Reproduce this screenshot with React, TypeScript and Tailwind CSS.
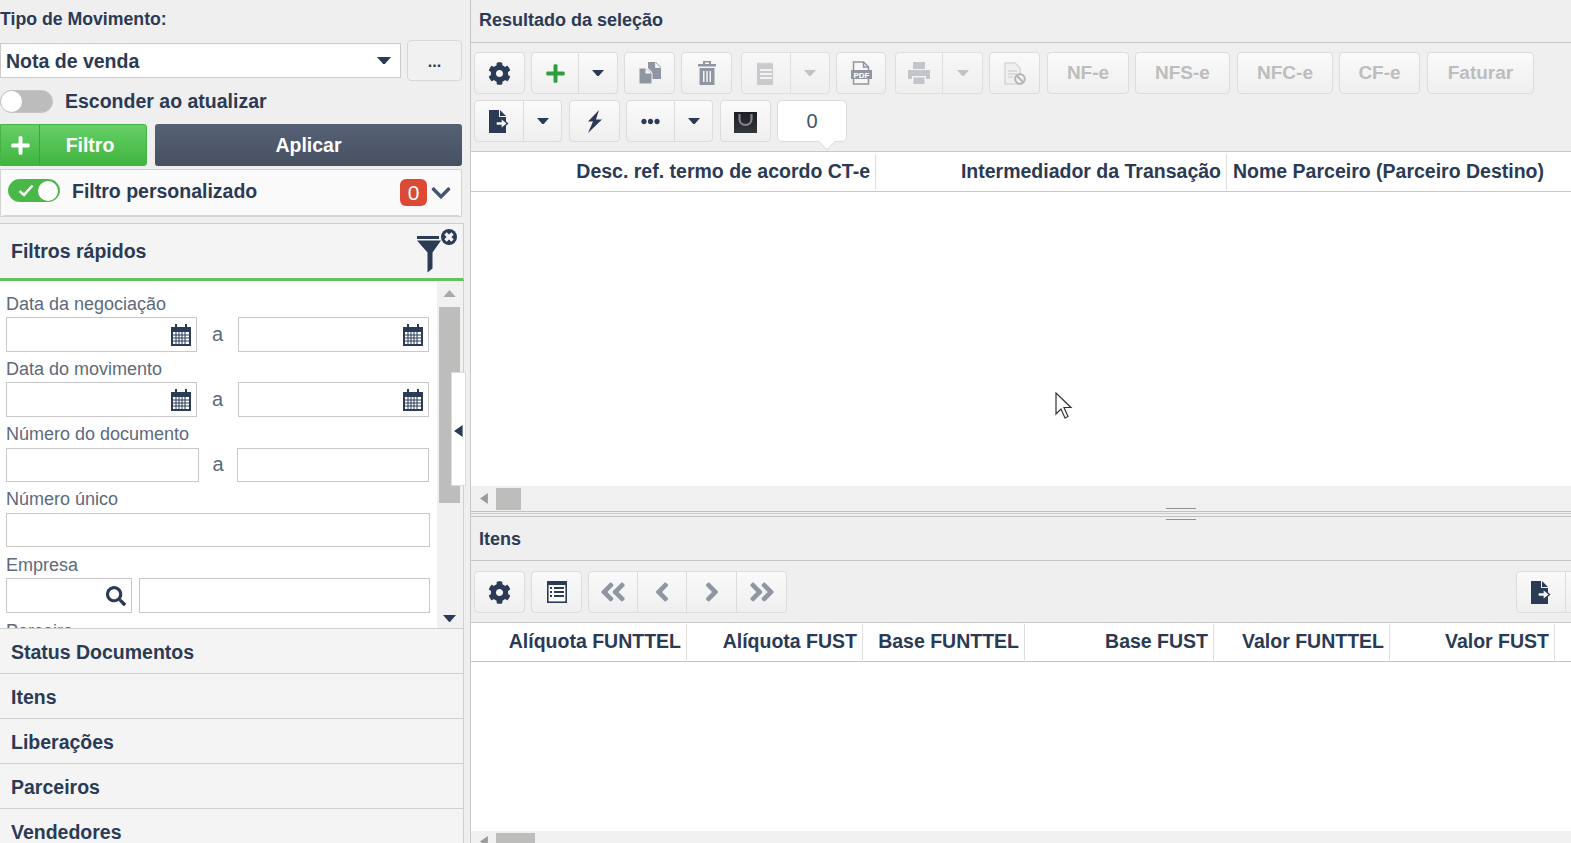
import type { ReactNode } from "react";
import {
  FaAngleDoubleLeft,
  FaAngleDoubleRight,
  FaAngleLeft,
  FaAngleRight,
  FaChevronDown,
  FaCog,
  FaEllipsisH,
  FaPlus,
  FaSearch,
} from "react-icons/fa";

const navy = "#2b3a55";

function Caret({ up, left, color = navy, size = 14 }: { up?: boolean; left?: boolean; color?: string; size?: number }) {
  let points = "0,0 14,0 7,8";
  if (up) points = "0,8 14,8 7,0";
  if (left) points = "10,0 10,14 0,7";
  return (
    <svg width={left ? size * 0.72 : size} height={left ? size : size * 0.57} viewBox={left ? "0 0 10 14" : "0 0 14 8"}>
      <polygon points={points} fill={color} />
    </svg>
  );
}

function Btn({ className, children }: { className: string; children?: ReactNode }) {
  return (
    <div className={`flex h-full shrink-0 items-center justify-center border border-[#dcdcdc] bg-linear-to-b from-[#fafafa] to-[#efefef] ${className}`}>
      {children}
    </div>
  );
}

function TextBtn({ className, label }: { className: string; label: string }) {
  return <Btn className={`rounded-[4px] text-[19px] font-bold text-[#bdbdbd] ${className}`}>{label}</Btn>;
}

function CalendarIcon() {
  return (
    <svg width="20" height="22" viewBox="0 0 20 22" className="shrink-0">
      <rect x="4" y="0" width="2" height="4" fill={navy} />
      <rect x="14" y="0" width="2" height="4" fill={navy} />
      <path d="M0 3h20v19H0z" fill={navy} />
      <rect x="2" y="8" width="16" height="12" fill="#fff" />
      <path d="M2 11h16M2 14h16M2 17h16M5 8v12M8 8v12M11 8v12M14 8v12" stroke={navy} strokeWidth="1" />
    </svg>
  );
}

function CopyIcon() {
  return (
    <svg width="22" height="22" viewBox="0 0 22 22" fill="#8f96a1">
      <path d="M9 0h8l5 5v12h-9v-7L9 6z" />
      <path d="M16.500 0.500v5h5" fill="#f6f6f6" stroke="#f6f6f6" strokeWidth="0.800" />
      <path d="M0 6h7l6 5v11H0z" stroke="#f6f6f6" strokeWidth="1" />
      <path d="M6.500 6.500v5h6" fill="#f6f6f6" />
    </svg>
  );
}

function TrashIcon() {
  return (
    <svg width="18" height="24" viewBox="0 0 18 24" fill="#8f96a1">
      <path d="M5 3V0h8v3h5v2.500H0V3zm2-1.500V3h4V1.500z" fillRule="evenodd" />
      <path d="M1.500 7h15v17h-15zM5 10v11h1.500V10zm3.250 0v11h1.500V10zm3.250 0v11H13V10z" fillRule="evenodd" />
    </svg>
  );
}

function ReceiptIcon() {
  return (
    <svg width="18" height="23" viewBox="0 0 18 23" fill="#bfc1c5">
      <path d="M0 2l1-2 1 2 1-2 1 2 1-2 1 2 1-2 1 2 1-2 1 2 1-2 1 2 1-2 1 2 1-2 1 2v21H0z" />
      <path d="M3 7h12v2H3zM3 11h12v2H3zM3 15h12v2H3z" fill="#f4f4f4" />
    </svg>
  );
}

function PdfIcon() {
  return (
    <svg width="21" height="24" viewBox="0 0 21 24">
      <path d="M2.500 1h10l5 5v17h-15z" fill="#f6f6f6" stroke="#8f96a1" strokeWidth="1.500" />
      <path d="M12.500 1v5h5" fill="none" stroke="#8f96a1" strokeWidth="1.500" />
      <rect x="0" y="9" width="21" height="9" fill="#8f96a1" />
      <text x="10.500" y="16.500" textAnchor="middle" fontSize="8" fontWeight="700" fill="#fff" fontFamily="Liberation Sans">PDF</text>
    </svg>
  );
}

function PrinterIcon() {
  return (
    <svg width="22" height="22" viewBox="0 0 22 22" fill="#b8bcc2">
      <path d="M5 0h12v7H5z" />
      <path d="M0 8h22v9h-4v-3H4v3H0z" />
      <path d="M5.500 15.500h11V22h-11z" />
    </svg>
  );
}

function BlockedDocIcon() {
  return (
    <svg width="22" height="23" viewBox="0 0 22 23">
      <path d="M1 1h10l5 5v16H1z" fill="#efefef" stroke="#d6d6d6" strokeWidth="1.500" />
      <path d="M4 9h9M4 12h9M4 15h5" stroke="#d6d6d6" strokeWidth="1.500" />
      <circle cx="16" cy="17" r="4.800" fill="#f4f4f4" stroke="#b4b4b4" strokeWidth="2" />
      <path d="M12.800 13.800l6.400 6.400" stroke="#b4b4b4" strokeWidth="2" />
    </svg>
  );
}

function ExportDocIcon() {
  return (
    <svg width="20" height="23" viewBox="0 0 20 23">
      <path d="M0 0h10v7h7v16H0z" fill={navy} />
      <path d="M11 0l6 6h-6z" fill={navy} />
      <path d="M7 11.500h5V8l6.500 5.500L12 19v-3.500H7z" fill="#f4f4f4" stroke={navy} strokeWidth="1.300" />
    </svg>
  );
}

function BoltIcon() {
  return (
    <svg width="15" height="23" viewBox="0 0 15 23" fill={navy}>
      <path d="M12 0L1 11.500h5L1 23 15 9.500H9z" />
    </svg>
  );
}

function BagIcon() {
  return (
    <svg width="23" height="21" viewBox="0 0 23 21">
      <defs>
        <linearGradient id="bag" x1="0" y1="0" x2="0" y2="1">
          <stop offset="0" stopColor="#1c1e23" />
          <stop offset="1" stopColor="#33363c" />
        </linearGradient>
      </defs>
      <rect width="23" height="21" fill="url(#bag)" />
      <path d="M5.500 2v5c0 8 12 8 12 0V2" fill="none" stroke="#80858c" strokeWidth="2.200" />
    </svg>
  );
}

function ListIcon() {
  return (
    <svg width="20" height="22" viewBox="0 0 20 22">
      <rect x="0.800" y="0.800" width="18.400" height="20.400" fill="#fff" stroke={navy} strokeWidth="1.600" />
      <rect x="0" y="0" width="20" height="4" fill={navy} />
      <path d="M3 7h2M7 7h10M3 11h2M7 11h10M3 15h2M7 15h10" stroke={navy} strokeWidth="1.800" />
    </svg>
  );
}

function FunnelIcon() {
  return (
    <svg width="42" height="44" viewBox="0 0 42 44">
      <rect x="0" y="7" width="22" height="3" fill={navy} />
      <path d="M0 11.500h24l-8.500 12v16l-5 4v-20z" fill={navy} />
      <circle cx="32" cy="8" r="8" fill={navy} />
      <path d="M28.500 4.500l7 7M35.500 4.500l-7 7" stroke="#f4f4f4" strokeWidth="3.400" />
    </svg>
  );
}

function CursorIcon() {
  return (
    <svg width="20" height="28" viewBox="0 0 20 28">
      <path d="M1 1v21l5-5 4 9 3-1.500-4-9h7z" fill="#fff" stroke="#333" strokeWidth="1.200" />
    </svg>
  );
}

function Switch({ on }: { on?: boolean }) {
  if (on) {
    return (
      <div className="flex h-[23px] w-[52px] shrink-0 items-center justify-between rounded-full border border-[#49b849] bg-[#49b849] pr-[1px] pl-[9px]">
        <svg width="16" height="13" viewBox="0 0 16 13">
          <path d="M1.500 7l4.500 4 8.500-9.500" fill="none" stroke="#fff" strokeWidth="2.600" />
        </svg>
        <div className="h-[20px] w-[20px] rounded-full bg-white" />
      </div>
    );
  }
  return (
    <div className="flex h-[23px] w-[53px] shrink-0 items-center rounded-full border border-[#c4c4c4] bg-[#bcbcbc]">
      <div className="h-[21px] w-[21px] rounded-full bg-white" />
    </div>
  );
}

function Label({ className, text }: { className: string; text: string }) {
  return (
    <div className={`flex shrink-0 items-end pl-[6px] text-[18px] leading-[20px] text-[#5d6a7c] ${className}`}>{text}</div>
  );
}

function Input({ className, children }: { className: string; children?: ReactNode }) {
  return (
    <div className={`flex shrink-0 items-center justify-end border border-[#c9c9c9] bg-white ${className}`}>{children}</div>
  );
}

function DateRow() {
  return (
    <div className="flex h-[35px] shrink-0 items-center pl-[6px]">
      <Input className="h-full w-[191px] pr-[5px]"><CalendarIcon /></Input>
      <span className="w-[41px] pb-[2px] text-center text-[20px] text-[#5d6a7c]">a</span>
      <Input className="h-full w-[191px] pr-[5px]"><CalendarIcon /></Input>
    </div>
  );
}

function AccordionRow({ title }: { title: string }) {
  return (
    <div className="flex h-[45px] shrink-0 items-center border-t border-[#cfcfcf] pt-[4px] pl-[11px] text-[19.500px] font-bold">{title}</div>
  );
}

function HeaderCell({ className, title }: { className: string; title: string }) {
  return (
    <div className={`flex h-[36px] shrink-0 items-center justify-end border-r border-[#dedede] pr-[5px] whitespace-nowrap ${className}`}>{title}</div>
  );
}

export default function App() {
  return (
    <div
      className="relative flex h-[843px] w-[1571px] overflow-hidden bg-[#f0efef] text-[#2b3a55]"
      style={{ fontFamily: '"Liberation Sans", Arial, sans-serif' }}
    >
      <aside className="flex h-full w-[470px] shrink-0 flex-col">
        <div className="flex h-[40px] shrink-0 items-center pb-[2px] text-[17.700px] font-bold">Tipo de Movimento:</div>

        <div className="flex h-[41px] w-[462px] shrink-0 items-start justify-between">
          <div className="mt-[3px] flex h-[35px] w-[401px] items-center justify-between border border-[#cccccc] bg-white pr-[9px] pl-[5px] text-[19.500px] font-bold">
            <span className="pt-[2px]">Nota de venda</span>
            <Caret />
          </div>
          <div className="flex h-[41px] w-[55px] items-center justify-center rounded-[4px] border border-[#d8d8d8] bg-[#f2f1f1] pt-[2px] text-[16px] font-bold">...</div>
        </div>

        <div className="mt-[9px] flex h-[23px] shrink-0 items-center gap-[12px]">
          <Switch />
          <span className="text-[19.500px] font-bold">Esconder ao atualizar</span>
        </div>

        <div className="mt-[11px] flex h-[42px] w-[462px] shrink-0 justify-between">
          <div className="flex w-[147px] items-center rounded-r-[3px] border border-[#45b445] bg-linear-to-b from-[#66cf66] to-[#3fb53f] text-white">
            <div className="flex h-full w-[39px] items-center justify-center border-r border-[#3ea53e]">
              <FaPlus size={21} />
            </div>
            <div className="flex-1 pt-[2px] pr-[6px] text-center text-[19.500px] font-bold">Filtro</div>
          </div>
          <div className="flex w-[307px] items-center justify-center rounded-[3px] bg-linear-to-b from-[#566176] to-[#465060] pt-[2px] text-[19.500px] font-bold text-white">Aplicar</div>
        </div>

        <div className="mt-[3px] h-[48px] w-[462px] shrink-0 border border-[#d3d3d3] bg-[#fafafa] px-[2px]">
          <div className="flex h-full items-start border-b border-[#d6d6d6] pt-[9px] pl-[5px]">
            <Switch on />
            <span className="mt-[1px] ml-[12px] text-[19.500px] leading-[22px] font-bold">Filtro personalizado</span>
            <div className="ml-auto flex h-[27px] w-[27px] items-center justify-center rounded-[6px] bg-[#dc4a36] text-[21px] text-white">0</div>
            <div className="flex h-[27px] w-[32px] items-center justify-center pr-[4px]"><FaChevronDown size={22} color="#46566c" /></div>
          </div>
        </div>

        <div className="mt-[6px] flex h-[58px] w-[464px] shrink-0 items-center justify-between border-t border-r border-b-[3px] border-t-[#cfcfcf] border-r-[#cfcfcf] border-b-[#5fc35f] bg-[#f4f4f4] pr-[4px] pl-[11px]">
          <span className="pt-[2px] text-[19.500px] font-bold">Filtros rápidos</span>
          <FunnelIcon />
        </div>

        <div className="flex h-[347px] w-[464px] shrink-0 overflow-hidden border-r border-[#cfcfcf] bg-white">
          <div className="flex flex-1 flex-col overflow-hidden">
            <Label className="h-[36px] pb-[3px]" text="Data da negociação" />
            <DateRow />
            <Label className="h-[30px] pb-[3px]" text="Data do movimento" />
            <DateRow />
            <Label className="h-[31px] pb-[4px]" text="Número do documento" />
            <div className="flex h-[34px] shrink-0 items-center pl-[6px]">
              <Input className="h-full w-[193px]" />
              <span className="w-[38px] pb-[2px] text-center text-[20px] text-[#5d6a7c]">a</span>
              <Input className="h-full w-[192px]" />
            </div>
            <Label className="h-[31px] pb-[4px]" text="Número único" />
            <div className="flex h-[34px] shrink-0 pl-[6px]"><Input className="h-full w-[424px]" /></div>
            <Label className="h-[31px] pb-[3px]" text="Empresa" />
            <div className="flex h-[35px] shrink-0 gap-[7px] pl-[6px]">
              <Input className="h-full w-[126px] pr-[5px]"><FaSearch size={20} /></Input>
              <Input className="h-full w-[291px]" />
            </div>
            <Label className="h-[31px] pb-[3px]" text="Parceiro" />
          </div>
          <div className="flex w-[26px] shrink-0 flex-col items-center bg-[#f1f1f1] pt-[9px] pr-[2px]">
            <Caret up color="#a8a8a8" size={13} />
            <div className="mt-[10px] h-[196px] w-[21px] bg-[#bdbdbb]" />
            <div className="mt-auto mb-[6px]"><Caret color={navy} size={13} /></div>
          </div>
        </div>

        <div className="flex w-[464px] flex-1 flex-col overflow-hidden border-r border-[#cfcfcf] bg-[#f4f4f4]">
          <AccordionRow title="Status Documentos" />
          <AccordionRow title="Itens" />
          <AccordionRow title="Liberações" />
          <AccordionRow title="Parceiros" />
          <AccordionRow title="Vendedores" />
        </div>
      </aside>

      {/* puxador que recolhe o painel de filtros */}
      <div className="absolute top-[372px] left-[451px] flex h-[114px] w-[15px] items-center justify-center border border-[#dddddd] bg-white pt-[3px]">
        <Caret left size={12} />
      </div>

      <main className="flex h-full min-w-0 flex-1 flex-col border-l border-[#c5c8cc] bg-[#efefef]">
        <div className="flex h-[43px] shrink-0 items-center border-b border-[#c5c5c5] pb-[1px] pl-[8px] text-[18px] font-bold">Resultado da seleção</div>

        <div className="flex h-[108px] shrink-0 flex-col gap-[6px] pt-[9px] pl-[3px]">
          <div className="flex h-[42px]">
            <Btn className="w-[51px] rounded-[4px]"><FaCog size={23} /></Btn>
            <Btn className="ml-[6px] w-[48px] rounded-l-[4px]"><FaPlus size={21} color="#2f9e3f" /></Btn>
            <Btn className="w-[39px] rounded-r-[4px] border-l-0"><Caret size={12} /></Btn>
            <Btn className="ml-[6px] w-[51px] rounded-[4px]"><CopyIcon /></Btn>
            <Btn className="ml-[6px] w-[51px] rounded-[4px]"><TrashIcon /></Btn>
            <Btn className="ml-[9px] w-[50px] rounded-l-[4px] opacity-80"><ReceiptIcon /></Btn>
            <Btn className="w-[39px] rounded-r-[4px] border-l-0 opacity-80"><Caret size={12} color="#b5b8bc" /></Btn>
            <Btn className="ml-[6px] w-[50px] rounded-[4px]"><PdfIcon /></Btn>
            <Btn className="ml-[9px] w-[48px] rounded-l-[4px] opacity-80"><PrinterIcon /></Btn>
            <Btn className="w-[40px] rounded-r-[4px] border-l-0 opacity-80"><Caret size={12} color="#b5b8bc" /></Btn>
            <Btn className="ml-[6px] w-[51px] rounded-[4px]"><BlockedDocIcon /></Btn>
            <TextBtn className="ml-[7px] w-[82px]" label="NF-e" />
            <TextBtn className="ml-[6px] w-[95px]" label="NFS-e" />
            <TextBtn className="ml-[7px] w-[96px]" label="NFC-e" />
            <TextBtn className="ml-[6px] w-[81px]" label="CF-e" />
            <TextBtn className="ml-[7px] w-[107px]" label="Faturar" />
          </div>

          <div className="flex h-[42px]">
            <Btn className="w-[50px] rounded-l-[4px]"><ExportDocIcon /></Btn>
            <Btn className="w-[38px] rounded-r-[4px] border-l-0"><Caret size={12} /></Btn>
            <Btn className="ml-[7px] w-[51px] rounded-[4px]"><BoltIcon /></Btn>
            <Btn className="ml-[6px] w-[49px] rounded-l-[4px]"><FaEllipsisH size={19} /></Btn>
            <Btn className="w-[38px] rounded-r-[4px] border-l-0"><Caret size={12} /></Btn>
            <Btn className="ml-[7px] w-[51px] rounded-[4px] pt-[2px]"><BagIcon /></Btn>
            <div className="relative ml-[6px] flex h-full w-[70px] items-center justify-center rounded-[5px] border border-[#dcdcdc] bg-white text-[20px] text-[#44546a]">
              0
              <div className="absolute -bottom-[7px] left-[43px] h-[12px] w-[12px] rotate-45 border-r border-b border-[#dcdcdc] bg-white" />
            </div>
          </div>
        </div>

        <div className="flex h-[41px] shrink-0 items-center border-y border-[#c5c8cc] bg-white text-[19.500px] font-bold">
          <HeaderCell className="w-[405px]" title="Desc. ref. termo de acordo CT-e" />
          <HeaderCell className="w-[351px]" title="Intermediador da Transação" />
          <div className="pl-[6px] whitespace-nowrap">Nome Parceiro (Parceiro Destino)</div>
        </div>

        <div className="h-[294px] shrink-0 bg-white" />

        <div className="flex h-[25px] shrink-0 items-center bg-[#f0f0f0] pl-[9px]">
          <Caret left size={11} color="#9b9b9b" />
          <div className="ml-[8px] h-[22px] w-[25px] bg-[#bdbdbb]" />
        </div>

        {/* divisor entre os dois grids */}
        <div className="relative h-[6px] shrink-0 border-y border-[#bfc1c4] bg-[#efefef]">
          <div className="h-[2px] border-b border-[#c9cbce]" />
          <div className="absolute -top-[4px] left-[695px] h-[12px] w-[30px] border-y border-[#8d9299]" />
        </div>

        <div className="flex h-[44px] shrink-0 items-center border-b border-[#c5c5c5] pt-[2px] pl-[8px] text-[18px] font-bold">Itens</div>

        <div className="flex h-[61px] shrink-0 items-start justify-between pt-[10px] pl-[3px]">
          <div className="flex h-[42px]">
            <Btn className="w-[51px] rounded-[4px]"><FaCog size={23} /></Btn>
            <Btn className="ml-[6px] w-[51px] rounded-[4px]"><ListIcon /></Btn>
            <Btn className="ml-[6px] w-[50px] rounded-l-[4px]"><FaAngleDoubleLeft size={30} color="#8f96a1" /></Btn>
            <Btn className="w-[49px] border-l-0"><FaAngleLeft size={30} color="#8f96a1" /></Btn>
            <Btn className="w-[50px] border-l-0"><FaAngleRight size={30} color="#8f96a1" /></Btn>
            <Btn className="w-[50px] rounded-r-[4px] border-l-0"><FaAngleDoubleRight size={30} color="#8f96a1" /></Btn>
          </div>
          <div className="flex h-[42px]">
            <Btn className="w-[50px] rounded-l-[4px]"><ExportDocIcon /></Btn>
            <Btn className="w-[5px] border-x-0" />
          </div>
        </div>

        <div className="flex h-[40px] shrink-0 items-center border-y border-[#c5c8cc] bg-white text-[19.500px] font-bold">
          <HeaderCell className="w-[216px]" title="Alíquota FUNTTEL" />
          <HeaderCell className="w-[176px]" title="Alíquota FUST" />
          <HeaderCell className="w-[162px]" title="Base FUNTTEL" />
          <HeaderCell className="w-[189px]" title="Base FUST" />
          <HeaderCell className="w-[176px]" title="Valor FUNTTEL" />
          <HeaderCell className="w-[165px]" title="Valor FUST" />
        </div>

        <div className="h-[169px] shrink-0 bg-white" />

        <div className="flex flex-1 items-start bg-[#f0f0f0] pt-[2px] pl-[9px]">
          <div className="mt-[3px]"><Caret left size={11} color="#9b9b9b" /></div>
          <div className="ml-[8px] h-[22px] w-[39px] bg-[#bdbdbb]" />
        </div>
      </main>

      <div className="absolute top-[392px] left-[1055px]"><CursorIcon /></div>
    </div>
  );
}
